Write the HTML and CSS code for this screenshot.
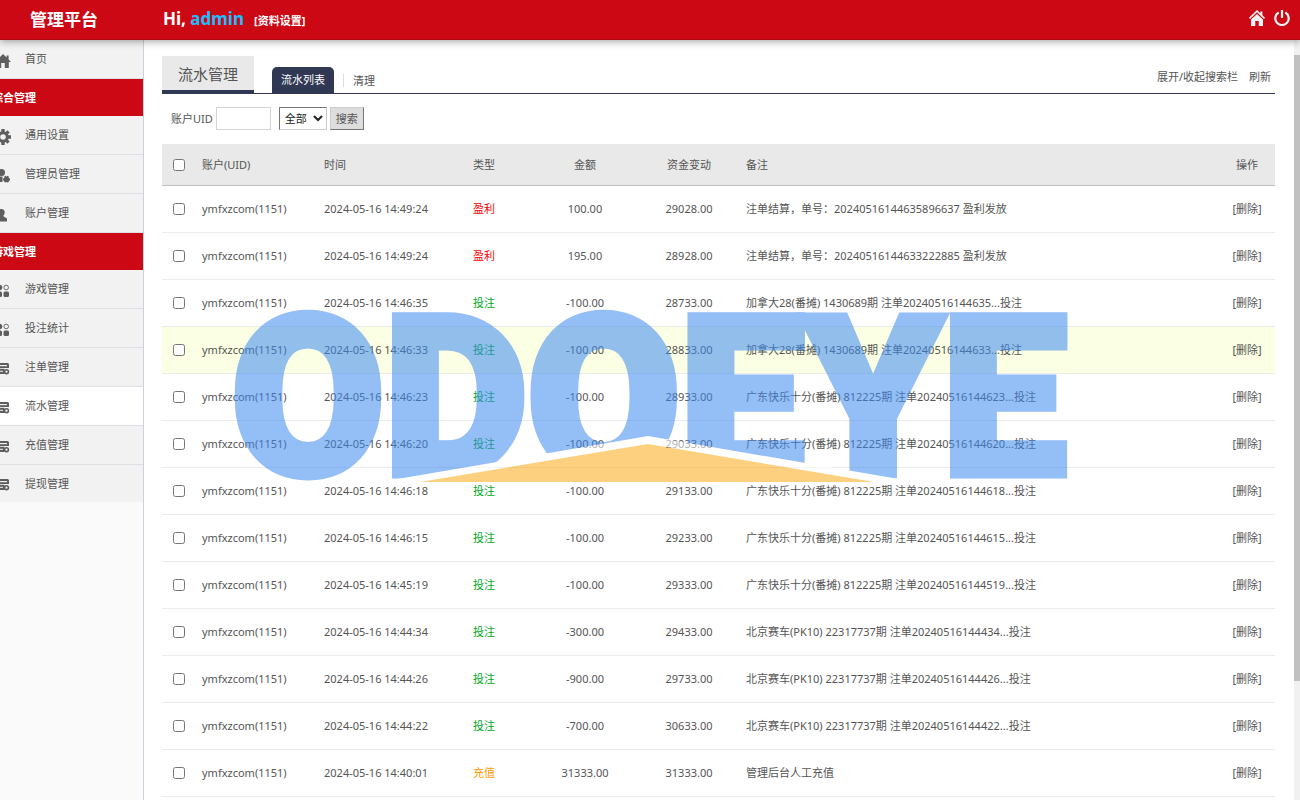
FILE: index.html
```html
<!DOCTYPE html>
<html lang="zh-CN">
<head>
<meta charset="utf-8">
<title>管理平台</title>
<link rel="stylesheet" href="styles.css">
</head>
<body>
<svg class="defs" width="0" height="0" aria-hidden="true">
  <symbol id="home" viewBox="0 0 16 16"><path d="M8 0 0 7.800l1 1.200 7-6.700L15 9l1-1.200-2.600-2.500V1.600h-2v1.700z"/><path d="M8 4 2 9.600V16h4.300v-5h3.400v5H14V9.600z"/></symbol>
  <symbol id="house" viewBox="0 0 16 16"><path d="M8 1 0 9h2.200v6h4v-5h3.600v5h4V9H16l-2.400-2.400V2.500h-2v2.100z"/></symbol>
  <symbol id="gear" viewBox="0 0 16 16"><circle cx="8" cy="8" r="4.300" fill="none" stroke="currentColor" stroke-width="3"/><path d="M6.300 0h3.400v3H6.300zM6.300 13h3.400v3H6.300zM0 6.300h3v3.400H0zM13 6.300h3v3.400h-3zM1.300 3.600l2.300-2.300 2 2-2.300 2.300zM10.400 12.700l2.300-2.300 2 2-2.300 2.300zM12.400 1.300l2.300 2.300-2 2-2.300-2.300zM3.300 10.400l2.300 2.300-2 2-2.300-2.300z"/></symbol>
  <symbol id="staff" viewBox="0 0 16 16"><circle cx="6.500" cy="4.500" r="3.500"/><path d="M0 14v-2.500C0 9.500 2 8.500 4 8.500h3.500v5.500z"/><circle cx="11.500" cy="11.500" r="2.800"/><path d="M8 10.500h7v2H8zM9.200 8.500l1.700-.8 3 6-1.700.8zM13.900 8.500l-1.700-.8-3 6 1.700.8z"/></symbol>
  <symbol id="person" viewBox="0 0 16 16"><path d="M6.500 2c2 0 3.200 1.400 3.200 3.300 0 1.500-.6 2.600-1.300 3.200v.8l3.600 2.200V14.500H1v-3l3.600-2.200v-.8C3.900 7.900 3.300 6.800 3.300 5.300 3.300 3.400 4.500 2 6.500 2z"/></symbol>
  <symbol id="apps" viewBox="0 0 16 16"><circle cx="4.500" cy="4.500" r="2.800"/><rect x="1.500" y="8.500" width="5.500" height="5.500" rx="1.500"/><rect x="8.500" y="8.500" width="5.500" height="5.500" rx="1.500"/><circle cx="11.200" cy="4.500" r="2.300" fill="none" stroke="currentColor" stroke-width=".9"/></symbol>
  <symbol id="ledger" viewBox="0 0 16 16"><path d="M1 2h11.500q1.500 0 1.500 1.500V7H1z"/><path d="M3 4h9v1.200H3z" fill="#f2f2f2"/><path d="M2 7.800h7.500v5.200H2z"/><path d="M4.500 9.800h3.500v1H4.500z" fill="#f2f2f2"/><circle cx="11.500" cy="10.700" r="1.900" fill="none" stroke="currentColor" stroke-width="1.600"/></symbol>
  <symbol id="power" viewBox="0 0 16 16"><path d="M4.700 2.500A6.700 6.700 0 1 0 11.300 2.500M8 0v8" fill="none" stroke="currentColor" stroke-width="2.200"/></symbol>
</svg>

<header class="topbar">
  <h1 class="brand">管理平台</h1>
  <p class="greeting">Hi, <span class="user">admin</span><a class="profile" href="#">[资料设置]</a></p>
  <div class="top-actions">
    <a href="#" aria-label="首页"><svg class="top-icon"><use href="#home"/></svg></a>
    <a href="#" aria-label="退出"><svg class="top-icon"><use href="#power"/></svg></a>
  </div>
</header>

<div class="shell">
  <nav class="sidebar">
    <ul class="menu">
      <li><a class="item" href="#"><svg class="icon"><use href="#house"/></svg>首页</a></li>
      <li class="group">综合管理</li>
      <li><a class="item" href="#"><svg class="icon"><use href="#gear"/></svg>通用设置</a></li>
      <li><a class="item" href="#"><svg class="icon"><use href="#staff"/></svg>管理员管理</a></li>
      <li><a class="item" href="#"><svg class="icon"><use href="#person"/></svg>账户管理</a></li>
      <li class="group">游戏管理</li>
      <li><a class="item" href="#"><svg class="icon"><use href="#apps"/></svg>游戏管理</a></li>
      <li><a class="item" href="#"><svg class="icon"><use href="#apps"/></svg>投注统计</a></li>
      <li><a class="item" href="#"><svg class="icon"><use href="#ledger"/></svg>注单管理</a></li>
      <li><a class="item active" href="#"><svg class="icon"><use href="#ledger"/></svg>流水管理</a></li>
      <li><a class="item" href="#"><svg class="icon"><use href="#ledger"/></svg>充值管理</a></li>
      <li><a class="item" href="#"><svg class="icon"><use href="#ledger"/></svg>提现管理</a></li>
    </ul>
  </nav>

  <main class="content">
    <div class="tabs">
      <h2 class="page-title">流水管理</h2>
      <a class="tab" href="#">流水列表</a>
      <a class="tab-link" href="#">清理</a>
      <div class="tools"><a href="#">展开/收起搜索栏</a><a href="#">刷新</a></div>
    </div>

    <form class="search">
      <label for="uid">账户UID</label>
      <input class="uid" id="uid" type="text">
      <select class="kind" aria-label="类型"><option>全部</option></select>
      <button class="submit" type="button">搜索</button>
    </form>

    <table class="records">
      <colgroup><col class="c-check"><col class="c-account"><col class="c-time"><col class="c-type"><col class="c-amount"><col class="c-balance"><col><col class="c-op"></colgroup>
      <thead>
        <tr><th class="mid"><input type="checkbox" aria-label="全选"></th><th>账户(UID)</th><th>时间</th><th class="mid">类型</th><th class="mid">金额</th><th class="mid">资金变动</th><th class="note">备注</th><th class="mid">操作</th></tr>
      </thead>
      <tbody>
        <tr><td class="mid"><input type="checkbox" aria-label="选择"></td><td>ymfxzcom(1151)</td><td>2024-05-16 14:49:24</td><td class="mid win">盈利</td><td class="mid">100.00</td><td class="mid">29028.00</td><td class="note">注单结算，单号：20240516144635896637 盈利发放</td><td class="mid"><a href="#">[删除]</a></td></tr>
        <tr><td class="mid"><input type="checkbox" aria-label="选择"></td><td>ymfxzcom(1151)</td><td>2024-05-16 14:49:24</td><td class="mid win">盈利</td><td class="mid">195.00</td><td class="mid">28928.00</td><td class="note">注单结算，单号：20240516144633222885 盈利发放</td><td class="mid"><a href="#">[删除]</a></td></tr>
        <tr><td class="mid"><input type="checkbox" aria-label="选择"></td><td>ymfxzcom(1151)</td><td>2024-05-16 14:46:35</td><td class="mid bet">投注</td><td class="mid">-100.00</td><td class="mid">28733.00</td><td class="note">加拿大28(番摊) 1430689期 注单20240516144635...投注</td><td class="mid"><a href="#">[删除]</a></td></tr>
        <tr class="hover"><td class="mid"><input type="checkbox" aria-label="选择"></td><td>ymfxzcom(1151)</td><td>2024-05-16 14:46:33</td><td class="mid bet">投注</td><td class="mid">-100.00</td><td class="mid">28833.00</td><td class="note">加拿大28(番摊) 1430689期 注单20240516144633...投注</td><td class="mid"><a href="#">[删除]</a></td></tr>
        <tr><td class="mid"><input type="checkbox" aria-label="选择"></td><td>ymfxzcom(1151)</td><td>2024-05-16 14:46:23</td><td class="mid bet">投注</td><td class="mid">-100.00</td><td class="mid">28933.00</td><td class="note">广东快乐十分(番摊) 812225期 注单20240516144623...投注</td><td class="mid"><a href="#">[删除]</a></td></tr>
        <tr><td class="mid"><input type="checkbox" aria-label="选择"></td><td>ymfxzcom(1151)</td><td>2024-05-16 14:46:20</td><td class="mid bet">投注</td><td class="mid">-100.00</td><td class="mid">29033.00</td><td class="note">广东快乐十分(番摊) 812225期 注单20240516144620...投注</td><td class="mid"><a href="#">[删除]</a></td></tr>
        <tr><td class="mid"><input type="checkbox" aria-label="选择"></td><td>ymfxzcom(1151)</td><td>2024-05-16 14:46:18</td><td class="mid bet">投注</td><td class="mid">-100.00</td><td class="mid">29133.00</td><td class="note">广东快乐十分(番摊) 812225期 注单20240516144618...投注</td><td class="mid"><a href="#">[删除]</a></td></tr>
        <tr><td class="mid"><input type="checkbox" aria-label="选择"></td><td>ymfxzcom(1151)</td><td>2024-05-16 14:46:15</td><td class="mid bet">投注</td><td class="mid">-100.00</td><td class="mid">29233.00</td><td class="note">广东快乐十分(番摊) 812225期 注单20240516144615...投注</td><td class="mid"><a href="#">[删除]</a></td></tr>
        <tr><td class="mid"><input type="checkbox" aria-label="选择"></td><td>ymfxzcom(1151)</td><td>2024-05-16 14:45:19</td><td class="mid bet">投注</td><td class="mid">-100.00</td><td class="mid">29333.00</td><td class="note">广东快乐十分(番摊) 812225期 注单20240516144519...投注</td><td class="mid"><a href="#">[删除]</a></td></tr>
        <tr><td class="mid"><input type="checkbox" aria-label="选择"></td><td>ymfxzcom(1151)</td><td>2024-05-16 14:44:34</td><td class="mid bet">投注</td><td class="mid">-300.00</td><td class="mid">29433.00</td><td class="note">北京赛车(PK10) 22317737期 注单20240516144434...投注</td><td class="mid"><a href="#">[删除]</a></td></tr>
        <tr><td class="mid"><input type="checkbox" aria-label="选择"></td><td>ymfxzcom(1151)</td><td>2024-05-16 14:44:26</td><td class="mid bet">投注</td><td class="mid">-900.00</td><td class="mid">29733.00</td><td class="note">北京赛车(PK10) 22317737期 注单20240516144426...投注</td><td class="mid"><a href="#">[删除]</a></td></tr>
        <tr><td class="mid"><input type="checkbox" aria-label="选择"></td><td>ymfxzcom(1151)</td><td>2024-05-16 14:44:22</td><td class="mid bet">投注</td><td class="mid">-700.00</td><td class="mid">30633.00</td><td class="note">北京赛车(PK10) 22317737期 注单20240516144422...投注</td><td class="mid"><a href="#">[删除]</a></td></tr>
        <tr><td class="mid"><input type="checkbox" aria-label="选择"></td><td>ymfxzcom(1151)</td><td>2024-05-16 14:40:01</td><td class="mid topup">充值</td><td class="mid">31333.00</td><td class="mid">31333.00</td><td class="note">管理后台人工充值</td><td class="mid"><a href="#">[删除]</a></td></tr>
      </tbody>
    </table>
  </main>
  <div class="scrollbar"><div class="thumb"></div></div>
</div>

<svg class="watermark" viewBox="0 0 840 180">
  <text class="mark" x="419" y="166" text-anchor="middle">ODOEYE</text>
  <path d="M138 176 418 128l280 48z" fill="#fff"/>
  <path class="roof" d="M190 174 418 136l226 38z"/>
</svg>
</body>
</html>
```
FILE: styles.css
```css
* { box-sizing: border-box; }

body {
  margin: 0;
  height: 100vh;
  display: flex;
  flex-direction: column;
  overflow: hidden;
  background: #fff;
  color: #555;
  font: 11px/16px "Noto Sans", "Noto Sans CJK SC", sans-serif;
}

a { color: inherit; text-decoration: none; }
h1, h2, p, ul { margin: 0; padding: 0; }
input, select, button { font: inherit; margin: 0; }
svg { fill: currentColor; }
.defs { position: absolute; }

.topbar {
  flex: none;
  position: relative;
  display: flex;
  align-items: center;
  height: 40px;
  padding-right: 10px;
  background: #cb0814;
  border-bottom: 1px solid #b00812;
  box-shadow: 0 1px 8px rgba(0, 0, 0, .4);
  color: #fff;
}
.brand { width: 163px; padding-left: 30px; font-size: 17px; line-height: 24px; }
.greeting { font-size: 17px; line-height: 24px; font-weight: 700; }
.user { color: #1ebcff; }
.profile { margin-left: 10px; font-size: 11px; }
.top-actions { display: flex; gap: 9px; margin-left: auto; padding-bottom: 3px; color: #f4f4f4; }
.top-icon { display: block; width: 16px; height: 16px; overflow: visible; }

.shell { flex: 1; min-height: 0; display: flex; }

.sidebar {
  flex: none;
  width: 144px;
  overflow: hidden;
  background: #fafafa;
  border-right: 1px solid #cbd3da;
}
.menu { margin-left: -8px; list-style: none; }
.item {
  display: flex;
  align-items: center;
  gap: 14px;
  height: 39px;
  padding-left: 3px;
  background: #f2f2f2;
  border-bottom: 1px solid #dde0e3;
}
li:last-child .item { height: 37px; border-bottom: 0; }
.item.active { background: #fff; }
.icon { width: 16px; height: 16px; margin-top: 3px; color: #5e5e5e; }
.group { height: 37px; background: #cb0814; color: #fff; font-weight: 700; line-height: 37px; }

.content { flex: 1; min-width: 0; overflow: hidden; padding: 16px 19px 0 18px; }

.tabs { display: flex; align-items: flex-end; height: 38px; border-bottom: 1px solid #303854; }
.page-title {
  height: 37px;
  padding: 0 16px;
  background: #e9e9e9;
  border-bottom: 3px solid #303854;
  font-size: 15px;
  font-weight: 400;
  line-height: 37px;
}
.tab {
  height: 26px;
  margin-left: 18px;
  padding: 0 9px;
  border-radius: 5px 5px 0 0;
  background: #303854;
  color: #fff;
  line-height: 26px;
}
.tab-link { margin: 0 0 6px 9px; padding-left: 9px; border-left: 1px solid #ddd; line-height: 13px; }
.tools { display: flex; gap: 11px; margin: 0 4px 8px auto; }

.search { display: flex; align-items: center; padding: 13px 9px 14px; }
.uid { width: 55px; height: 23px; margin: 0 8px 0 3px; border: 1px solid #d4d4d4; background: #fff; }
.kind { width: 48px; height: 23px; padding: 0 0 0 1px; border: 1px solid #777; border-right-color: #ccc; border-bottom-color: #ccc; background: #fff; color: #222; }
.submit { height: 23px; margin-left: 3px; padding: 0 5px; border: 1px solid #ccc; border-right: 1px solid #777; border-bottom: 1px solid #777; background: #ddd; color: #555; }

.records { width: 100%; table-layout: fixed; border-collapse: separate; border-spacing: 0; }
.c-check { width: 40px; }
.c-account { width: 122px; }
.c-time { width: 136px; }
.c-type { width: 48px; }
.c-amount { width: 154px; }
.c-balance { width: 54px; }
.c-op { width: 56px; }
.records th, .records td { padding: 0; text-align: left; font-weight: 400; white-space: nowrap; }
.records th { height: 42px; background: #e9e9e9; border-bottom: 1px solid #bfbfbf; }
.records td { height: 47px; border-bottom: 1px solid #ebebeb; }
.records .mid { text-align: center; }
.records .mid input { display: block; width: 12px; height: 12px; margin: 0 0 0 11px; }
.records .note { padding-left: 30px; }
.hover td { background: #fbffe3; }
.win { color: #f00; }
.bet { color: #00a91c; }
.topup { color: #ff9c00; }

.scrollbar { flex: none; width: 6px; padding-top: 15px; background: #f1f1f1; }
.thumb { height: 84%; background: #c1c1c1; }

.watermark {
  position: absolute;
  left: 230px;
  top: 308px;
  width: 840px;
  height: 180px;
  opacity: .55;
  pointer-events: none;
}
.mark {
  font: 900 221px Roboto, sans-serif;
  fill: #3c89f0;
  stroke: #3c89f0;
  stroke-width: 9px;
}
.roof { fill: #fdaa18; }
```
